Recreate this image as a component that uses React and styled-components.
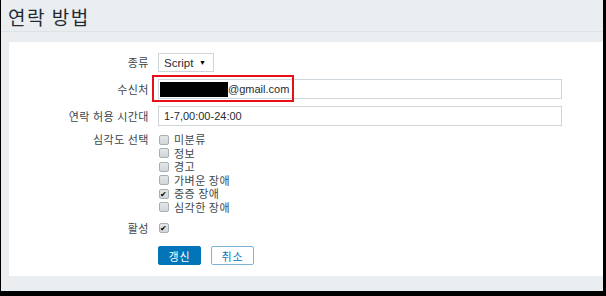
import React from 'react'
import styled, { createGlobalStyle } from 'styled-components'

const GlobalStyle = createGlobalStyle`
  html, body {
    margin: 0;
    padding: 0;
    background: #000;
  }
`

const Frame = styled.div`
  width: 606px;
  height: 296px;
  box-sizing: border-box;
  padding: 0 3px 5px 1px;
  background: #000;
`

const Screen = styled.div`
  height: 100%;
  background: #ebeef0;
  display: flex;
  flex-direction: column;
  font-family: "Liberation Sans", "Noto Sans CJK KR", sans-serif;
  color: #1f2c33;
`

const Header = styled.div`
  height: 32px;
  box-sizing: border-box;
  border-bottom: 1px solid #dde2e5;
  padding: 5px 0 0 7px;
  font-family: "Noto Sans CJK KR", sans-serif;
  font-size: 19px;
  line-height: 23px;
  letter-spacing: 1.5px;
  color: #1f2c33;
`

const Card = styled.div`
  margin: 10px 0 0 8px;
  height: 234px;
  box-sizing: border-box;
  background: #fff;
  padding: 11px 0 0 0;
  display: grid;
  grid-template-columns: 140px 1fr;
  grid-template-rows: 19px 20px 20px 81px 14px 19px;
  column-gap: 9px;
  row-gap: 7px;
  align-items: start;
`

const Label = styled.div`
  height: ${({ h }) => h || 19}px;
  text-align: right;
  font-family: "Noto Sans CJK KR", sans-serif;
  font-size: 11px;
  line-height: ${({ h }) => h || 19}px;
  color: #3b474d;
  letter-spacing: 0.5px;
  white-space: nowrap;
`

const Field = styled.div`
  position: relative;
  display: flex;
  align-items: center;
  padding-right: ${({ right }) => right || 0}px;
`

const Select = styled.div`
  width: 56px;
  height: 19px;
  box-sizing: border-box;
  border: 1px solid #cfd6db;
  display: flex;
  align-items: center;
  justify-content: space-between;
  padding: 0 7px 0 5px;
  font-size: 11.5px;
  color: #1f2c33;
`

const Caret = styled.span`
  font-size: 7px;
  color: #000;
`

const Input = styled.div`
  flex: 1;
  height: 20px;
  box-sizing: border-box;
  border: 1px solid #cfd6db;
  display: flex;
  align-items: center;
  padding-left: ${({ pad }) => pad || 5}px;
  font-size: 11px;
  color: #1f2c33;
`

const Redacted = styled.span`
  display: inline-block;
  width: 68px;
  height: 15px;
  background: #000;
`

const Highlight = styled.div`
  position: absolute;
  left: -6px;
  top: -4px;
  width: 142px;
  height: 27px;
  box-sizing: border-box;
  border: 2px solid #e5101a;
  pointer-events: none;
`

const CheckList = styled.div`
  display: flex;
  flex-direction: column;
`

const CheckRow = styled.div`
  display: flex;
  align-items: center;
  height: ${({ h }) => h || 13.5}px;
  line-height: ${({ h }) => h || 13.5}px;
  gap: 5px;
  font-family: "Noto Sans CJK KR", sans-serif;
  font-size: 11px;
  color: #3b474d;
  letter-spacing: 0.5px;
`

const Box = styled.span`
  width: 10px;
  height: 10px;
  margin-left: 1px;
  box-sizing: border-box;
  border: 1px solid #a9b0b4;
  border-radius: 2px;
  background: linear-gradient(#e4e6e8, #d2d6d9);
  display: flex;
  align-items: center;
  justify-content: center;
  font-size: 8px;
  line-height: 1;
  color: #000;
`

const Buttons = styled.div`
  grid-column: 2;
  display: flex;
  gap: 10px;
  margin-top: 4px;
`

const Button = styled.div`
  width: 43px;
  height: 19px;
  box-sizing: border-box;
  border-radius: 2px;
  border: 1px solid ${({ primary }) => (primary ? '#0275b8' : '#7fb4da')};
  background: ${({ primary }) => (primary ? '#0275b8' : '#fff')};
  color: ${({ primary }) => (primary ? '#fff' : '#0275b8')};
  font-family: "Noto Sans CJK KR", sans-serif;
  font-size: 11px;
  display: flex;
  align-items: center;
  justify-content: center;
  letter-spacing: 1px;
`

const severities = [
  { name: '미분류', checked: false },
  { name: '정보', checked: false },
  { name: '경고', checked: false },
  { name: '가벼운 장애', checked: false },
  { name: '중증 장애', checked: true },
  { name: '심각한 장애', checked: false },
]

const App = () => (
  <>
    <GlobalStyle />
    <Frame>
      <Screen>
        <Header>연락 방법</Header>
        <Card>
          <Label>종류</Label>
          <Field>
            <Select>
              Script <Caret>▼</Caret>
            </Select>
          </Field>

          <Label h={20}>수신처</Label>
          <Field right={41}>
            <Input pad={1}>
              <Redacted />
              @gmail.com
            </Input>
            <Highlight />
          </Field>

          <Label h={20}>연락 허용 시간대</Label>
          <Field right={41}>
            <Input>1-7,00:00-24:00</Input>
          </Field>

          <Label h={13.5}>심각도 선택</Label>
          <CheckList>
            {severities.map((s) => (
              <CheckRow key={s.name}>
                <Box>{s.checked ? '✔' : ''}</Box>
                {s.name}
              </CheckRow>
            ))}
          </CheckList>

          <Label h={14}>활성</Label>
          <CheckRow h={14}>
            <Box>✔</Box>
          </CheckRow>

          <Buttons>
            <Button primary>갱신</Button>
            <Button>취소</Button>
          </Buttons>
        </Card>
      </Screen>
    </Frame>
  </>
)

export default App
